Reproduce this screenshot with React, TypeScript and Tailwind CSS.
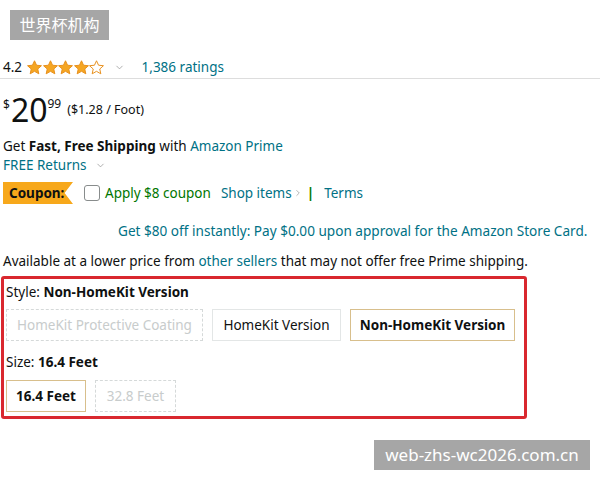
import { ChevronDown, ChevronRight } from 'lucide-react';

const font = { fontFamily: '"Noto Sans", "Noto Sans CJK SC", sans-serif' };

function Star({ filled }: { filled: boolean }) {
  return (
    <svg width="17" height="17" viewBox="0 0 24 24" className="-mr-[1.5px]">
      <path
        d="M12 2.5l2.9 6.3 6.9.7-5.2 4.6 1.5 6.8L12 17.4l-6.1 3.5 1.5-6.8-5.2-4.6 6.9-.7z"
        fill={filled ? '#f5a623' : '#fff'}
        stroke="#e8901c"
        strokeWidth="1.4"
        strokeLinejoin="round"
      />
    </svg>
  );
}

function Option({
  label,
  state,
  className = '',
}: {
  label: string;
  state: 'off' | 'idle' | 'on';
  className?: string;
}) {
  const look =
    state === 'on'
      ? 'border border-[#d8bf8c] font-bold text-[#0f1111]'
      : state === 'idle'
        ? 'border border-[#e3e6e6] text-[#0f1111]'
        : 'border border-dashed border-[#d5d9d9] text-[#c8cccc]';
  return (
    <div className={`h-[32px] flex items-center justify-center text-[13.5px] ${look} ${className}`}>
      {label}
    </div>
  );
}

export default function App() {
  return (
    <div className="w-[600px] h-[480px] bg-white relative overflow-hidden text-[#0f1111]" style={font}>
      {/* site badge */}
      <div className="ml-[10px] pt-[10px]">
        <div className="w-[99px] h-[30px] bg-[#a6a6a6] text-white text-[16px] flex items-center justify-center">
          世界杯机构
        </div>
      </div>

      {/* rating row */}
      <div className="mt-[18px] h-[19px] flex items-center pl-[3px] text-[13.5px]">
        <span>4.2</span>
        <div className="flex items-center ml-[4px]">
          <Star filled />
          <Star filled />
          <Star filled />
          <Star filled />
          <Star filled={false} />
        </div>
        <ChevronDown size={11} strokeWidth={1.5} className="ml-[10px] text-[#8c8c8c]" />
        <span className="ml-[17px] text-[#007185]">1,386 ratings</span>
      </div>
      <div className="mt-[1px] h-px bg-[#dddddd]" />

      {/* price */}
      <div className="mt-[17px] flex items-start pl-[3px] h-[32px]">
        <span className="text-[12px] leading-none mt-[3px]">$</span>
        <span className="text-[32px] leading-[32px] -mt-[2px] ml-[1px]">20</span>
        <span className="text-[12px] leading-none mt-[2px]">99</span>
        <span className="ml-[6px] text-[12.5px] mt-[5px]">($1.28 / Foot)</span>
      </div>

      {/* shipping */}
      <div className="mt-[9px] pl-[3px] text-[13.5px] leading-[19px]">
        Get <span className="font-bold">Fast, Free Shipping</span> with{' '}
        <span className="text-[#007185]">Amazon Prime</span>
      </div>
      <div className="pl-[3px] text-[13.5px] leading-[19px] text-[#007185] flex items-center">
        FREE Returns
        <ChevronDown size={11} strokeWidth={1.5} className="ml-[8px] text-[#8c8c8c]" />
      </div>

      {/* coupon */}
      <div className="mt-[7px] flex items-center pl-[3px] text-[13.5px]">
        <div className="w-[70px] h-[22px] bg-[#f7a81b] font-bold text-[13.5px] flex items-center pl-[6px] [clip-path:polygon(0_0,100%_0,88%_50%,100%_100%,0_100%)]">
          Coupon:
        </div>
        <div className="ml-[11px] w-[16px] h-[16px] border border-[#888c8c] rounded-[3px]" />
        <span className="ml-[5px] text-[#007600]">Apply $8 coupon</span>
        <span className="ml-[10px] text-[#007185] flex items-center">
          Shop items
          <ChevronRight size={10} strokeWidth={1.5} className="ml-[1px] text-[#8c8c8c]" />
        </span>
        <span className="ml-[4px] text-[#007600] font-bold">|</span>
        <span className="ml-[10px] text-[#007185]">Terms</span>
      </div>

      {/* store card */}
      <div className="mt-[17px] pl-[118px] text-[13.6px] leading-[19px] text-[#007185]">
        Get $80 off instantly: Pay $0.00 upon approval for the Amazon Store Card.
      </div>

      <div className="mt-[12px] pl-[3px] text-[13.5px] leading-[19px]">
        Available at a lower price from <span className="text-[#007185]">other sellers</span> that may not
        offer free Prime shipping.
      </div>

      {/* variations */}
      <div className="mt-[5px] ml-[1px] w-[526px] h-[143px] border-[3px] border-[#d9282f] rounded-[3px] pl-[2px] pt-[4px]">
        <div className="text-[13.5px] leading-[19px]">
          Style: <span className="font-bold">Non-HomeKit Version</span>
        </div>
        <div className="mt-[7px] flex gap-[9px]">
          <Option label="HomeKit Protective Coating" state="off" className="w-[197px]" />
          <Option label="HomeKit Version" state="idle" className="w-[129px]" />
          <Option label="Non-HomeKit Version" state="on" className="w-[165px]" />
        </div>
        <div className="mt-[12px] text-[13.5px] leading-[19px]">
          Size: <span className="font-bold">16.4 Feet</span>
        </div>
        <div className="mt-[8px] flex gap-[9px]">
          <Option label="16.4 Feet" state="on" className="w-[80px]" />
          <Option label="32.8 Feet" state="off" className="w-[81px]" />
        </div>
      </div>

      {/* domain badge */}
      <div className="absolute left-[374px] top-[440px] w-[216px] h-[30px] bg-[#a6a6a6] text-white text-[17px] flex items-center justify-center">
        web-zhs-wc2026.com.cn
      </div>
    </div>
  );
}
